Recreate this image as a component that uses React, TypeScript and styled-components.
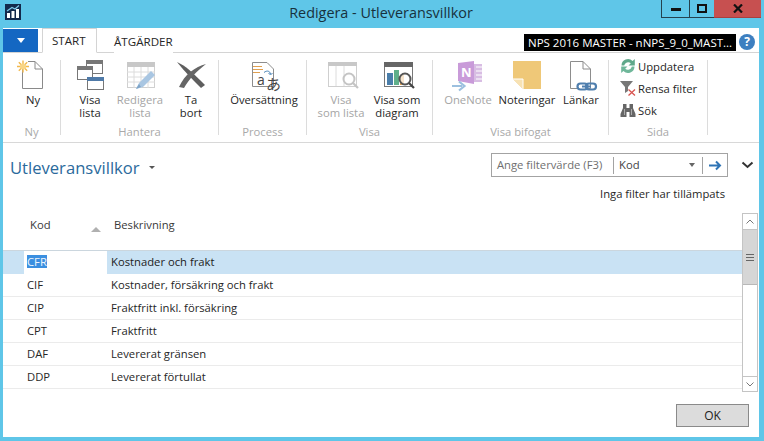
import React from "react";
import styled, { createGlobalStyle } from "styled-components";

const Global = createGlobalStyle`
  html, body { margin: 0; padding: 0; background: #5fc6e8; overflow: hidden; }
  * { box-sizing: border-box; }
`;

const Window = styled.div`
  width: 764px; height: 441px; background: #5fc6e8;
  padding: 0 5px 4px 3px; display: flex; flex-direction: column;
  font-family: "Open Sans", "Noto Sans", sans-serif; font-size: 11.25px; color: #262626;
`;
const TitleBar = styled.header`
  height: 28px; flex: none; display: grid; grid-template-columns: 1fr auto 1fr; align-items: start;
`;
const AppIcon = styled.svg`margin: 4px 0 0 2px; display: block;`;
const Title = styled.div`font-size: 14.4px; line-height: 26px; color: #17313d;`;
const Controls = styled.div`justify-self: end; margin-right: -2px; display: flex; height: 18px;`;
const Control = styled.div<{ $w: number; $close?: boolean }>`
  width: ${p => p.$w}px; height: 18px; display: flex; align-items: center; justify-content: center;
  background: ${p => (p.$close ? "#c75050" : "transparent")};
  border-bottom: 1px solid ${p => (p.$close ? "#a84040" : "#24414e")};
  border-left: ${p => (p.$close ? "none" : "1px solid #24414e")};
`;
const Body = styled.main`flex: 1; background: #fff; display: flex; flex-direction: column; min-height: 0;`;
const TabRow = styled.nav`
  height: 25px; flex: none; display: flex; align-items: flex-end; border-bottom: 1px solid #d4d4d4; position: relative;
`;
const FileButton = styled.div`
  width: 35px; height: 23px; background: #1467c2; display: flex; align-items: center; justify-content: center;
`;
const Tab = styled.div<{ $active?: boolean }>`
  height: ${p => (p.$active ? 25 : 23)}px; margin-left: ${p => (p.$active ? 4 : 17)}px;
  margin-bottom: -1px; padding: 0 ${p => (p.$active ? 9 : 0)}px;
  width: ${p => (p.$active ? "55px" : "auto")};
  background: #fff; font-size: 11.6px; line-height: 24px; color: #262626;
  ${p => p.$active && "border: 1px solid #d4d4d4; border-bottom: 1px solid #fff;"}
`;
const Workspace = styled.div`
  margin-left: auto; align-self: flex-start; margin-top: 6px; width: 212px; height: 17px; background: #000; color: #fff;
  font-size: 11.5px; line-height: 17px; padding-left: 4px; white-space: nowrap; overflow: hidden;
`;
const Help = styled.div`
  width: 16px; height: 16px; border-radius: 50%; background: #3d7fc0; color: #fff; font-weight: 700; font-size: 12px; line-height: 16px;
  text-align: center; align-self: flex-start; margin: 6px 4px 0 3px;
`;
const Ribbon = styled.section`
  height: 90px; flex: none; padding-top: 7px; display: flex; border-bottom: 1px solid #d8d8d8; align-items: flex-start;
`;
const Group = styled.div<{ $w: number }>`
  width: ${p => p.$w}px; height: 75px; border-right: 1px solid #dcdcdc; display: flex; flex-direction: column; flex: none;
`;
const GroupItems = styled.div<{ $pad?: number }>`
  flex: 1; display: flex; padding-left: ${p => p.$pad ?? 0}px; min-height: 0;
`;
const GroupLabel = styled.div`
  height: 14px; margin-bottom: -4px; text-align: center; color: #a9a9a9; font-size: 11.25px; line-height: 14px;
`;
const RibbonButton = styled.div<{ $w: number; $off?: boolean }>`
  width: ${p => p.$w}px; flex: none; display: flex; flex-direction: column; align-items: center;
  color: ${p => (p.$off ? "#a5a5a5" : "#262626")}; line-height: 13px; text-align: center;
`;
const ButtonIcon = styled.svg`display: block; width: 36px; height: 32px; flex: none; margin-bottom: 1px; overflow: visible;`;
const ButtonLabel = styled.div`white-space: pre-line;`;
const SmallList = styled.div`margin: -5px 0 0 11px; display: flex; flex-direction: column;`;
const SmallRow = styled.div`height: 22px; flex: none; display: flex; align-items: center; gap: 2px; white-space: nowrap;`;

const PageHead = styled.div`
  flex: none; padding: 10px 5px 0 7px; display: flex; align-items: flex-start;
`;
const Heading = styled.h1`
  margin: 3px 0 0; font-weight: 400; font-size: 16.6px; line-height: 24px; color: #2b6a9c;
`;
const HeadCaret = styled.span`
  margin: 13px 0 0 9px; width: 0; height: 0; border: 3px solid transparent; border-top: 3px solid #555; border-bottom: none;
`;
const FilterBox = styled.div`
  margin-left: auto; width: 237px; height: 24px; border: 1px solid #a3a3a3; display: flex; align-items: center; color: #6f6f6f;
`;
const FilterHint = styled.span`width: 122px; padding-left: 5px; white-space: nowrap; border-right: 1px solid #a3a3a3; line-height: 16px; height: 17px;`;
const FilterField = styled.span`flex: 1; padding-left: 5px; color: #444; line-height: 16px; height: 17px;`;
const FilterCaret = styled.span`
  width: 0; height: 0; border: 3.5px solid transparent; border-top: 4px solid #666; border-bottom: none; margin-right: 7px;
`;
const FilterGo = styled.span`
  width: 25px; height: 17px; border-left: 1px solid #a3a3a3; display: flex; align-items: center; justify-content: center;
`;
const Expand = styled.svg`margin: 8px 0 0 13px; display: block;`;
const FilterNote = styled.div`flex: none; height: 24px; margin: 2px 0 7px; padding-right: 34px; text-align: right; line-height: 24px;`;
const ListArea = styled.div`flex: none; height: 179px; display: flex; padding-right: 1px;`;
const Table = styled.div`flex: 1; min-width: 0;`;
const HeaderRow = styled.div`
  height: 38px; display: flex; border-bottom: 1px solid #cbd6de; align-items: flex-start; color: #3a3a3a; padding-top: 4px;
`;
const KodHead = styled.div`width: 104px; padding-left: 27px; line-height: 15px; position: relative; flex: none;`;
const SortArrow = styled.span`
  position: absolute; left: 88px; top: 10px; width: 0; height: 0;
  border: 5px solid transparent; border-bottom: 5px solid #b0b0b0; border-top: none;
`;
const DescHead = styled.div`padding-left: 7px; line-height: 15px;`;
const Row = styled.div<{ $sel?: boolean }>`
  height: 23px; display: flex; align-items: stretch;
  border-bottom: 1px solid #ebebeb;
  ${p => p.$sel && "border-bottom: none; background: #c9e2f4; color: #1c1c1c;"}
`;
const KodCell = styled.div<{ $sel?: boolean }>`
  width: 104px; flex: none; display: flex; align-items: center; padding: 0 0 2px 24px;
  ${p => p.$sel && "margin-left: 21px; width: 83px; padding-left: 3px; background: #fff;"}
`;
const Highlight = styled.span`background: #3b8fe0; color: #eef5fc; height: 13px; line-height: 13px; display: inline-block;`;
const DescCell = styled.div`padding: 0 0 2px 4px; display: flex; align-items: center;`;
const Scrollbar = styled.div`width: 16px; flex: none; display: flex; flex-direction: column; border: 1px solid #c4c4c4; border-top: none; border-bottom: none;`;
const ScrollButton = styled.div<{ $h: number }>`
  height: ${p => p.$h}px; flex: none; display: flex; align-items: center; justify-content: center; border-top: 1px solid #c4c4c4; border-bottom: 1px solid #c4c4c4; background: #fff;
`;
const Thumb = styled.div`
  height: 55px; background: #d6d6d6; border-bottom: 1px solid #b8b8b8; flex: none; display: flex; align-items: center; justify-content: center;
`;
const Track = styled.div`flex: 1;`;
const Footer = styled.footer`flex: 1; display: flex; justify-content: flex-end; align-items: flex-end; padding: 0 10px 10px 0;`;
const OkButton = styled.button`
  width: 73px; height: 23px; background: #dcdcdc; border: 1px solid #8a8a8a; font: inherit; font-size: 12px; color: #222; padding: 0;
`;

const Ny = () => (
  <ButtonIcon viewBox="0 0 36 32">
    <path d="M7.5 9V28.5H27.5V9L20 1.5H13M20 1.5V9H27.5" fill="#fff" stroke="#8a8a8a" />
    <g stroke="#f2b84b" strokeWidth="1.4">
      <path d="M2 6.5H14M8 .5V12.5M3.8 2.3L12.2 10.7M12.2 2.3L3.8 10.7" />
    </g>
    <circle cx="8" cy="6.5" r="3" fill="#f8d586" />
  </ButtonIcon>
);
const Win = ({ x, y, w, h, bar }: { x: number; y: number; w: number; h: number; bar: string }) => (
  <g>
    <rect x={x + 0.5} y={y + 0.5} width={w - 1} height={h - 1} fill="#fff" stroke="#777" />
    <rect x={x} y={y} width={w} height="4" fill={bar} />
  </g>
);
const VisaLista = () => (
  <ButtonIcon viewBox="0 0 36 32">
    <Win x={14} y={0} w={17} h={14} bar="#777" />
    <Win x={5} y={6} w={16} h={14} bar="#777" />
    <Win x={15} y={17} w={17} h={13} bar="#4f7aa8" />
  </ButtonIcon>
);
const Redigera = () => (
  <ButtonIcon viewBox="0 0 36 32">
    <rect x="5.5" y="2.5" width="27" height="25" fill="#fff" stroke="#d0d0d0" />
    <rect x="5" y="2" width="28" height="5" fill="#c8c8c8" />
    <path d="M5 12H33M5 17H33M5 22H33M12 7V28M19 7V28M26 7V28" stroke="#dcdcdc" />
    <path d="M14 29L17 23L29 11L33 15L21 27Z" fill="#a9c6e2" />
    <path d="M14 29L17 24L19 27Z" fill="#7fa5c9" />
  </ButtonIcon>
);
const TaBort = () => (
  <ButtonIcon viewBox="0 0 36 32">
    <path d="M4 2C13 6 20 13 32 25L28 28C20 20 12 12 4 2Z" fill="#5e5e5e" />
    <path d="M33 4C22 7 12 14 6 27L11 28C16 19 24 11 33 4Z" fill="#666" />
  </ButtonIcon>
);
const Oversattning = () => (
  <ButtonIcon viewBox="0 0 36 32">
    <path d="M6.5 2.5H21L27.5 9V26.5H6.5Z" fill="#fff" stroke="#8d8d8d" />
    <path d="M7 6.5H16M7 9.5H17M7 12.5H14" stroke="#e0a050" />
    <path d="M18 12.5C21 10 24 11 24.5 14M22.5 13L24.5 15L26.5 13" fill="none" stroke="#4c86b8" />
    <text x="11" y="25" fontSize="14" fontFamily="Open Sans, sans-serif" fill="#444">a</text>
    <text x="20" y="30" fontSize="15" fontFamily="Noto Sans CJK JP, sans-serif" fill="#444">あ</text>
  </ButtonIcon>
);
const Lens = ({ c, h }: { c: string; h: string }) => (
  <g>
    <circle cx="26" cy="19" r="5.5" fill="#fff" fillOpacity=".7" stroke={c} strokeWidth="2" />
    <path d="M30 23L35 28" stroke={h} strokeWidth="2.2" />
  </g>
);
const VisaSomLista = () => (
  <ButtonIcon viewBox="0 0 36 32">
    <rect x="5.5" y="2.5" width="28" height="24" fill="#fff" stroke="#cfcfcf" />
    <rect x="5" y="2" width="29" height="4" fill="#c8c8c8" />
    <path d="M13 6V26M21 6V26" stroke="#dcdcdc" />
    <Lens c="#c4c4c4" h="#c4c4c4" />
  </ButtonIcon>
);
const VisaDiagram = () => (
  <ButtonIcon viewBox="0 0 36 32">
    <rect x="5.5" y="2.5" width="28" height="24" fill="#fff" stroke="#777" />
    <rect x="5" y="2" width="29" height="5" fill="#666" />
    <rect x="8" y="13" width="6" height="12" fill="#4a7eaa" />
    <rect x="15" y="10" width="5" height="15" fill="#5faf8a" />
    <rect x="21" y="15" width="4" height="10" fill="#e0a050" />
    <Lens c="#555" h="#444" />
  </ButtonIcon>
);
const OneNote = () => (
  <ButtonIcon viewBox="0 0 36 32">
    <path d="M18 4H32V22H18Z" fill="#d8bde3" />
    <path d="M26 7H32M26 11H32M26 15H32M26 19H32" stroke="#fff" />
    <path d="M8 3L24 1V24L8 21Z" fill="#c99bd9" />
    <text x="11" y="17" fontSize="13" fontWeight="700" fontFamily="Open Sans, sans-serif" fill="#fff">N</text>
    <path d="M2 26H12M9 21.5L14.5 26L9 30.5M2 26" fill="none" stroke="#9cc0df" strokeWidth="2.2" />
  </ButtonIcon>
);
const Noteringar = () => (
  <ButtonIcon viewBox="0 0 36 32">
    <path d="M4 1H32V29H14L4 19Z" fill="#efc878" />
    <path d="M4 19H14V29" fill="#f7e2b4" stroke="#fff" />
  </ButtonIcon>
);
const Lankar = () => (
  <ButtonIcon viewBox="0 0 36 32">
    <path d="M7.5 1.5H20L27.5 9V28.5H7.5Z" fill="#fff" stroke="#8d8d8d" />
    <path d="M20 1.5V9H27.5" fill="none" stroke="#8d8d8d" />
    <rect x="14.5" y="23.5" width="10" height="6" rx="3" fill="#fff" stroke="#4f7fae" strokeWidth="2.2" />
    <rect x="23" y="23.5" width="10" height="6" rx="3" fill="none" stroke="#4f7fae" strokeWidth="2.2" />
    <path d="M19 26.5H28" stroke="#4f7fae" strokeWidth="2" />
  </ButtonIcon>
);
const Refresh = () => (
  <svg width="16" height="16" viewBox="0 0 16 16">
    <path d="M1.5 7.5A6.5 6.5 0 0 1 12.6 3L14.8 1V7.5H8.5L10.8 5.2A4 4 0 0 0 4.2 7.5Z" fill="#5fa88a" />
    <path d="M14.5 8.5A6.5 6.5 0 0 1 3.4 13L1.2 15V8.5H7.5L5.2 10.8A4 4 0 0 0 11.8 8.5Z" fill="#6fb79a" />
  </svg>
);
const ClearFilter = () => (
  <svg width="16" height="16" viewBox="0 0 16 16">
    <path d="M0 1H13L8 7V11L5 13V7Z" fill="#777" />
    <path d="M8.5 9.5L15 15.5M15 9.5L8.5 15.5" stroke="#d9534f" strokeWidth="1.3" />
  </svg>
);
const Binoculars = () => (
  <svg width="16" height="16" viewBox="0 0 16 16">
    <path d="M3 2H6.5V6H9.5V2H13V6L15.5 12V15H9.5V10H6.5V15H.5V12L3 6Z" fill="#666" />
    <path d="M4.5 7V13M11.5 7V13" stroke="#aaa" />
  </svg>
);
const Chevron = ({ up, w = 8 }: { up?: boolean; w?: number }) => (
  <svg width={w} height="5" viewBox="0 0 8 5">
    <path d={up ? "M.5 4.5L4 1L7.5 4.5" : "M.5 .5L4 4L7.5 .5"} fill="none" stroke="#777" />
  </svg>
);

const rows = [
  ["CIF", "Kostnader, försäkring och frakt"],
  ["CIP", "Fraktfritt inkl. försäkring"],
  ["CPT", "Fraktfritt"],
  ["DAF", "Levererat gränsen"],
  ["DDP", "Levererat förtullat"],
];

export default function App() {
  return (
    <Window>
      <Global />
      <TitleBar>
        <AppIcon width="16" height="16" viewBox="0 0 16 16">
          <rect width="16" height="16" fill="#13294b" />
          <path d="M2 14V9H5V14ZM6.5 14V7H9.5V14ZM11 14V5H14V14Z" fill="#fff" />
          <path d="M2 7L7 3.5L10 5L14 1.5" fill="none" stroke="#7fc8e8" strokeWidth="1.2" />
        </AppIcon>
        <Title>Redigera - Utleveransvillkor</Title>
        <Controls>
          <Control $w={28}><svg width="10" height="4"><rect width="10" height="3" y="1" fill="#111" /></svg></Control>
          <Control $w={25}><svg width="10" height="9"><rect x="1" y="1" width="8" height="7" fill="none" stroke="#111" strokeWidth="2" /></svg></Control>
          <Control $close $w={47}><svg width="10" height="9" viewBox="0 0 10 9"><path d="M1 .5L9 8.5M9 .5L1 8.5" stroke="#111" strokeWidth="2.2" /></svg></Control>
        </Controls>
      </TitleBar>
      <Body>
        <TabRow>
          <FileButton><svg width="8" height="5"><path d="M0 0H8L4 5Z" fill="#fff" /></svg></FileButton>
          <Tab $active>START</Tab>
          <Tab>ÅTGÄRDER</Tab>
          <Workspace>NPS 2016 MASTER - nNPS_9_0_MAST...</Workspace>
          <Help>?</Help>
        </TabRow>
        <Ribbon>
          <Group $w={58}>
            <GroupItems $pad={3}>
              <RibbonButton $w={54}><Ny /><ButtonLabel>Ny</ButtonLabel></RibbonButton>
            </GroupItems>
            <GroupLabel>Ny</GroupLabel>
          </Group>
          <Group $w={158}>
            <GroupItems $pad={4}>
              <RibbonButton $w={50}><VisaLista /><ButtonLabel>{"Visa\nlista"}</ButtonLabel></RibbonButton>
              <RibbonButton $w={50} $off><Redigera /><ButtonLabel>{"Redigera\nlista"}</ButtonLabel></RibbonButton>
              <RibbonButton $w={52}><TaBort /><ButtonLabel>{"Ta\nbort"}</ButtonLabel></RibbonButton>
            </GroupItems>
            <GroupLabel>Hantera</GroupLabel>
          </Group>
          <Group $w={88}>
            <GroupItems $pad={5}>
              <RibbonButton $w={80}><Oversattning /><ButtonLabel>Översättning</ButtonLabel></RibbonButton>
            </GroupItems>
            <GroupLabel>Process</GroupLabel>
          </Group>
          <Group $w={126}>
            <GroupItems $pad={8}>
              <RibbonButton $w={52} $off><VisaSomLista /><ButtonLabel>{"Visa\nsom lista"}</ButtonLabel></RibbonButton>
              <RibbonButton $w={60}><VisaDiagram /><ButtonLabel>{"Visa som\ndiagram"}</ButtonLabel></RibbonButton>
            </GroupItems>
            <GroupLabel>Visa</GroupLabel>
          </Group>
          <Group $w={176}>
            <GroupItems $pad={5}>
              <RibbonButton $w={60} $off><OneNote /><ButtonLabel>OneNote</ButtonLabel></RibbonButton>
              <RibbonButton $w={58}><Noteringar /><ButtonLabel>Noteringar</ButtonLabel></RibbonButton>
              <RibbonButton $w={50}><Lankar /><ButtonLabel>Länkar</ButtonLabel></RibbonButton>
            </GroupItems>
            <GroupLabel>Visa bifogat</GroupLabel>
          </Group>
          <Group $w={99}>
            <GroupItems>
              <SmallList>
                <SmallRow><Refresh />Uppdatera</SmallRow>
                <SmallRow><ClearFilter />Rensa filter</SmallRow>
                <SmallRow><Binoculars />Sök</SmallRow>
              </SmallList>
            </GroupItems>
            <GroupLabel>Sida</GroupLabel>
          </Group>
        </Ribbon>
        <PageHead>
          <Heading>Utleveransvillkor</Heading>
          <HeadCaret />
          <FilterBox>
            <FilterHint>Ange filtervärde (F3)</FilterHint>
            <FilterField>Kod</FilterField>
            <FilterCaret />
            <FilterGo>
              <svg width="13" height="11" viewBox="0 0 13 11"><path d="M0 5.5H11M7 1.5L11 5.5L7 9.5" fill="none" stroke="#2f74b5" strokeWidth="2" /></svg>
            </FilterGo>
          </FilterBox>
          <Expand width="13" height="8" viewBox="0 0 13 8"><path d="M1.5 1.5L6.5 6L11.5 1.5" fill="none" stroke="#333" strokeWidth="2" /></Expand>
        </PageHead>
        <FilterNote>Inga filter har tillämpats</FilterNote>
        <ListArea>
          <Table>
            <HeaderRow>
              <KodHead>Kod<SortArrow /></KodHead>
              <DescHead>Beskrivning</DescHead>
            </HeaderRow>
            <Row $sel>
              <KodCell $sel><Highlight>CFR</Highlight></KodCell>
              <DescCell>Kostnader och frakt</DescCell>
            </Row>
            {rows.map(([k, d]) => (
              <Row key={k}>
                <KodCell>{k}</KodCell>
                <DescCell>{d}</DescCell>
              </Row>
            ))}
          </Table>
          <Scrollbar>
            <ScrollButton $h={17}><Chevron up /></ScrollButton>
            <Thumb>
              <svg width="8" height="7"><path d="M0 .5H8M0 3.5H8M0 6.5H8" stroke="#666" /></svg>
            </Thumb>
            <Track />
            <ScrollButton $h={16}><Chevron /></ScrollButton>
          </Scrollbar>
        </ListArea>
        <Footer><OkButton>OK</OkButton></Footer>
      </Body>
    </Window>
  );
}
